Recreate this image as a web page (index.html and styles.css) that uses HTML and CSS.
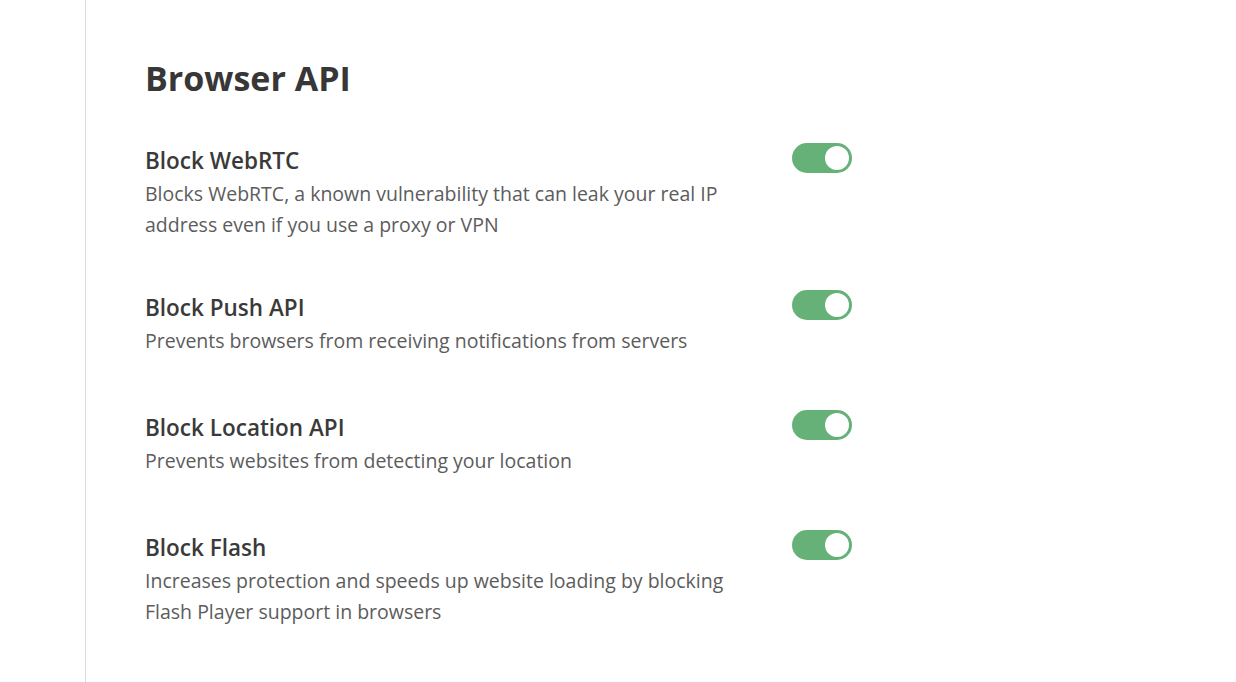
FILE: index.html
```html
<!DOCTYPE html>
<html lang="en">

<head>
    <meta charset="UTF-8">
    <meta name="viewport" content="width=device-width, initial-scale=1.0">
    <title>Browser API - Settings</title>
    <link rel="stylesheet" href="styles.css">
</head>

<body>
    <div class="layout">
        <aside class="sidebar"></aside>

        <main class="content">
            <h1 class="section-title">Browser API</h1>

            <div class="setting">
                <div class="setting-text">
                    <h3>Block WebRTC</h3>
                    <p>Blocks WebRTC, a known vulnerability that can leak your real IP address even if you use a proxy or VPN</p>
                </div>
                <label class="switch">
                    <input type="checkbox" checked>
                    <span class="slider"></span>
                </label>
            </div>

            <div class="setting">
                <div class="setting-text">
                    <h3>Block Push API</h3>
                    <p>Prevents browsers from receiving notifications from servers</p>
                </div>
                <label class="switch">
                    <input type="checkbox" checked>
                    <span class="slider"></span>
                </label>
            </div>

            <div class="setting">
                <div class="setting-text">
                    <h3>Block Location API</h3>
                    <p>Prevents websites from detecting your location</p>
                </div>
                <label class="switch">
                    <input type="checkbox" checked>
                    <span class="slider"></span>
                </label>
            </div>

            <div class="setting">
                <div class="setting-text">
                    <h3>Block Flash</h3>
                    <p>Increases protection and speeds up website loading by blocking Flash Player support in browsers</p>
                </div>
                <label class="switch">
                    <input type="checkbox" checked>
                    <span class="slider"></span>
                </label>
            </div>
        </main>
    </div>
</body>

</html>
```

FILE: styles.css
```css
/* base */
html,
body {
    margin: 0;
    height: 100%;
}

body {
    font-family: "Open Sans", "Noto Sans", Arial, sans-serif;
    background-color: #fff;
    color: #3b3b3b;
}

.layout {
    display: flex;
    min-height: 100%;
}

/* left rail */
.sidebar {
    width: 85px;
    flex-shrink: 0;
    border-right: 1px solid #dcdcdc;
}

/* settings */
.content {
    width: 707px;
    padding: 52px 0 0 59px;
}

.section-title {
    margin: 0 0 40px;
    font-size: 34px;
    line-height: 52px;
    font-weight: 700;
    color: #373737;
}

.setting {
    display: flex;
    justify-content: space-between;
    align-items: flex-start;
    min-height: 69px;
    margin-bottom: 51px;
}

.setting-text {
    width: 600px;
    padding-top: 2px;
}

.setting-text h3 {
    margin: 0;
    font-size: 22.5px;
    line-height: 30px;
    font-weight: 600;
    color: #3a3a3a;
}

.setting-text p {
    margin: 2px 0 0;
    font-size: 19.5px;
    line-height: 31px;
    color: #5c5c5c;
}

/* toggle */
.switch {
    position: relative;
    display: inline-block;
    width: 60px;
    height: 30px;
    margin-top: -1px;
    cursor: pointer;
}

.switch input {
    display: none;
}

.slider {
    position: absolute;
    inset: 0;
    border-radius: 15px;
    background-color: #ccc;
}

.slider::after {
    content: "";
    position: absolute;
    top: 3px;
    left: 3px;
    width: 24px;
    height: 24px;
    border-radius: 50%;
    background-color: #fff;
}

.switch input:checked + .slider {
    background-color: #66b178;
}

.switch input:checked + .slider::after {
    left: 33px;
}
```
